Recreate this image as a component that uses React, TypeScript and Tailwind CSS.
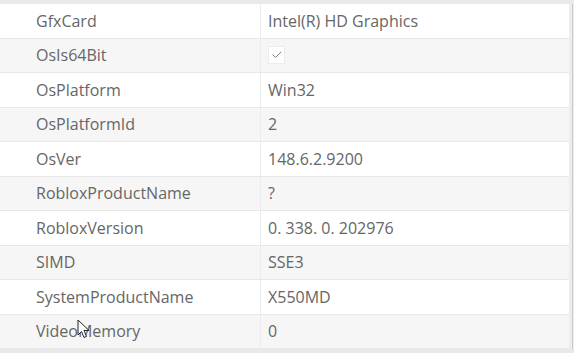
import { Check } from "lucide-react";

const rows: { name: string; value: string | boolean }[] = [
  { name: "GfxCard", value: "Intel(R) HD Graphics" },
  { name: "OsIs64Bit", value: true },
  { name: "OsPlatform", value: "Win32" },
  { name: "OsPlatformId", value: "2" },
  { name: "OsVer", value: "148.6.2.9200" },
  { name: "RobloxProductName", value: "?" },
  { name: "RobloxVersion", value: "0. 338. 0. 202976" },
  { name: "SIMD", value: "SSE3" },
  { name: "SystemProductName", value: "X550MD" },
  { name: "VideoMemory", value: "0" },
];

export default function App() {
  return (
    <div
      className="relative h-[353px] w-[574px] overflow-hidden bg-[#e9e9e9] pt-[4px] text-[16px] text-[#666666]"
      style={{ fontFamily: "'Open Sans', sans-serif" }}
    >
      <div className="flex">
        <div className="w-[569px]">
          {rows.map((row, i) => (
            <div
              key={row.name}
              className={`flex h-[34.5px] items-center border-b border-[#e8e8e8] ${i % 2 === 0 ? "bg-white" : "bg-[#f6f6f6]"}`}
            >
              <div className="flex h-full w-[261px] items-center border-r border-[#ececec] pl-[36px]">
                {row.name}
              </div>
              <div className="flex h-full flex-1 items-center pl-[7px]">
                {row.value === true ? (
                  <span className="flex h-[18px] w-[17px] items-center justify-center border border-[#ececec] bg-white">
                    <Check className="h-[12px] w-[12px] text-[#808080]" strokeWidth={2} />
                  </span>
                ) : (
                  row.value
                )}
              </div>
            </div>
          ))}
        </div>
        <div className="w-[3px] bg-[#ededed]" />
        <div className="w-[1px] bg-[#c9c9c9]" />
        <div className="w-[1px] bg-[#ededed]" />
      </div>

      {/* mouse pointer */}
      <svg className="absolute left-[77px] top-[319px]" width="13" height="20" viewBox="0 0 13 20">
        <path d="M1 1 L1 16 L4.5 12.5 L7 18.5 L9.5 17.5 L7 11.5 L12 11.5 Z" fill="#fff" stroke="#222" strokeWidth="1" strokeLinejoin="round" />
      </svg>
    </div>
  );
}
